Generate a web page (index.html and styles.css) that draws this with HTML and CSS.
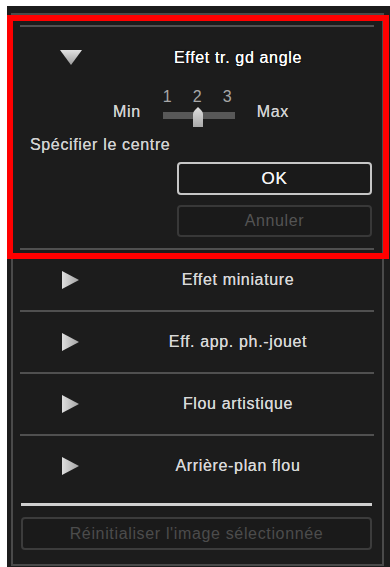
FILE: index.html
```html
<!DOCTYPE html>
<html lang="fr">
<head>
<meta charset="utf-8">
<title>Effets</title>
<link rel="stylesheet" href="styles.css">
</head>
<body>
<svg class="defs" width="0" height="0" aria-hidden="true">
  <defs>
    <linearGradient id="gDown" x1="0" y1="0" x2="0" y2="1">
      <stop offset="0" stop-color="#e2e2e2"/>
      <stop offset="1" stop-color="#9c9c9c"/>
    </linearGradient>
    <linearGradient id="gRight" x1="0" y1="0" x2="1" y2="0">
      <stop offset="0" stop-color="#dedede"/>
      <stop offset="1" stop-color="#a4a4a4"/>
    </linearGradient>
    <linearGradient id="gThumb" x1="0" y1="0" x2="0" y2="1">
      <stop offset="0" stop-color="#e0e0e0"/>
      <stop offset="1" stop-color="#a9a9a9"/>
    </linearGradient>
  </defs>
</svg>
<div class="window">
  <div class="panel">
    <div class="sep"></div>
    <div class="section">
      <div class="row-head">
        <span class="icon"><svg width="22" height="18" viewBox="0 0 22 18"><polygon points="0,1 22,1 11,16" fill="url(#gDown)"/></svg></span>
        <span class="title active">Effet tr. gd angle</span>
      </div>
      <div class="slider-row">
        <span class="lbl">Min</span>
        <div class="slider">
          <div class="ticks"><span>1</span><span>2</span><span>3</span></div>
          <div class="track"></div>
          <svg class="thumb" width="12" height="20" viewBox="0 0 12 20"><path d="M1,20 L1,7 Q1,5 3,3 L6,0 L9,3 Q11,5 11,7 L11,20 Z" fill="url(#gThumb)"/></svg>
        </div>
        <span class="lbl">Max</span>
      </div>
      <div class="center-label">Spécifier le centre</div>
      <div class="btns">
        <button class="btn ok">OK</button>
        <button class="btn dis">Annuler</button>
      </div>
    </div>
    <div class="sep"></div>
    <div class="row">
      <span class="icon"><svg width="22" height="18" viewBox="0 0 22 18"><polygon points="2,0 19,9 2,18" fill="url(#gRight)"/></svg></span>
      <span class="title">Effet miniature</span>
    </div>
    <div class="row">
      <span class="icon"><svg width="22" height="18" viewBox="0 0 22 18"><polygon points="2,0 19,9 2,18" fill="url(#gRight)"/></svg></span>
      <span class="title">Eff. app. ph.-jouet</span>
    </div>
    <div class="row">
      <span class="icon"><svg width="22" height="18" viewBox="0 0 22 18"><polygon points="2,0 19,9 2,18" fill="url(#gRight)"/></svg></span>
      <span class="title">Flou artistique</span>
    </div>
    <div class="row last">
      <span class="icon"><svg width="22" height="18" viewBox="0 0 22 18"><polygon points="2,0 19,9 2,18" fill="url(#gRight)"/></svg></span>
      <span class="title">Arrière-plan flou</span>
    </div>
    <div class="white-sep"></div>
    <button class="btn reset">Réinitialiser l'image sélectionnée</button>
  </div>
</div>
<div class="highlight"></div>
</body>
</html>
```
FILE: styles.css
```css
html, body {
  margin: 0;
  padding: 0;
  background: #ffffff;
}
body {
  font-family: "Liberation Sans", Arial, sans-serif;
  font-size: 16px;
  position: relative;
  width: 390px;
  height: 567px;
  overflow: hidden;
}
.defs {
  position: absolute;
  width: 0;
  height: 0;
}
.window {
  margin: 6px 0 0 7px;
  width: 383px;
  height: 561px;
  background: #1c1c1c;
  padding: 7px 0 0 4px;
  box-sizing: border-box;
}
.panel {
  width: 373px;
  height: 553px;
  border: 2px solid #4a4a4a;
  box-sizing: border-box;
  padding: 10px 8px 0 7px;
  display: flex;
  flex-direction: column;
}
.sep {
  height: 2px;
  background: #505050;
  flex: none;
}
.section {
  display: flex;
  flex-direction: column;
  padding-bottom: 11px;
}
.row-head {
  display: flex;
  align-items: center;
  height: 62px;
}
.icon {
  width: 82px;
  padding-left: 40px;
  box-sizing: border-box;
  display: flex;
  align-items: center;
  flex: none;
}
.icon svg {
  display: block;
}
.title {
  flex: 1;
  text-align: center;
  font-size: 16px;
  line-height: 18px;
  letter-spacing: 0.65px;
  color: #d8d8d8;
  text-shadow: 0 0 0.6px #d8d8d8;
}
.title.active {
  color: #ffffff;
  text-shadow: 0 0 0.6px #fff, 0 0 2px #000;
}
.slider-row {
  display: flex;
  align-items: flex-start;
  height: 38px;
  padding-left: 93px;
  gap: 22px;
}
.lbl {
  margin-top: 14px;
  line-height: 18px;
  font-size: 16px;
  letter-spacing: 0.65px;
  color: #d2d2d2;
  text-shadow: 0 0 0.6px #d2d2d2;
}
.slider {
  position: relative;
  width: 72px;
  height: 38px;
}
.ticks {
  display: flex;
  justify-content: space-between;
  padding-right: 3px;
  font-size: 16px;
  line-height: 16px;
  color: #a8a8a8;
}
.track {
  margin-top: 7px;
  height: 7px;
  background: #585858;
}
.thumb {
  position: absolute;
  left: 29px;
  top: 18px;
}
.center-label {
  margin-top: 9px;
  line-height: 18px;
  padding-left: 10px;
  font-size: 16px;
  letter-spacing: 0.65px;
  color: #d2d2d2;
  text-shadow: 0 0 0.6px #d2d2d2;
}
.btns {
  margin-top: 8px;
  display: flex;
  flex-direction: column;
  align-items: flex-end;
  gap: 10px;
  padding-right: 2px;
}
.btn {
  font-family: "Liberation Sans", Arial, sans-serif;
  font-size: 16px;
  letter-spacing: 0.65px;
  background: #1a1a1a;
  border-radius: 4px;
  box-sizing: border-box;
  padding: 0;
  margin: 0;
}
.ok {
  width: 195px;
  height: 33px;
  border: 2px solid #c6c6c6;
  color: #f4f4f4;
  font-size: 17px;
  text-shadow: 0 0 0.6px #f4f4f4;
}
.dis {
  width: 195px;
  height: 32px;
  border: 2px solid #383838;
  color: #545454;
}
.row {
  display: flex;
  align-items: center;
  height: 62px;
  border-bottom: 2px solid #505050;
  box-sizing: border-box;
  flex: none;
}
.row.last {
  height: 60px;
  border-bottom: none;
}
.white-sep {
  margin: 7px 2px 0 1px;
  height: 3px;
  background: #cfcfcf;
  flex: none;
}
.reset {
  margin: 11px 2px 0 1px;
  height: 33px;
  border: 2px solid #3c3c3c;
  color: #4c4c4c;
  flex: none;
}
.highlight {
  position: absolute;
  left: 7px;
  top: 15px;
  width: 382px;
  height: 244px;
  border: 6px solid #ff0000;
  box-sizing: border-box;
}
```
